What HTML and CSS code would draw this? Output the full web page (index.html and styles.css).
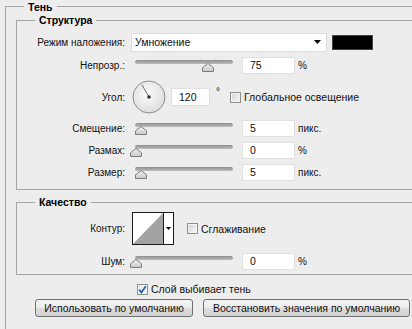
FILE: index.html
```html
<!DOCTYPE html>
<html lang="ru">
<head>
  <meta charset="UTF-8">
  <title>Тень</title>
  <link rel="stylesheet" href="styles.css">
</head>
<body>

<section class="dialog">
  <div class="dialog-title"><span>Тень</span></div>

  <div class="dialog-body">
    <!-- Структура -->
    <fieldset class="group structure">
      <legend>Структура</legend>

      <div class="row row-blend">
        <span class="label">Режим наложения:</span>
        <div class="select">
          <span>Умножение</span>
          <svg class="select-arrow" width="7" height="4" viewBox="0 0 7 4"><polygon points="0,0 7,0 3.5,4" fill="#000"/></svg>
        </div>
        <span class="swatch"></span>
      </div>

      <div class="row row-slider row-opacity">
        <span class="label">Непрозр.:</span>
        <div class="slider">
          <div class="track"></div>
          <svg class="thumb" style="left:71px" width="12" height="9" viewBox="0 0 12 9"><use href="#thumb-shape"/></svg>
        </div>
        <span class="field">75</span>
        <span class="unit">%</span>
      </div>

      <div class="row row-angle">
        <span class="label">Угол:</span>
        <svg class="dial" width="34" height="34" viewBox="0 0 34 34">
          <defs>
            <radialGradient id="dial-fill" cx="0.45" cy="0.4" r="0.7">
              <stop offset="0" stop-color="#fbfbfb"/>
              <stop offset="1" stop-color="#d9d9d9"/>
            </radialGradient>
          </defs>
          <circle cx="17" cy="17" r="16" fill="url(#dial-fill)" stroke="#8c8c8c"/>
          <line x1="17" y1="17" x2="10" y2="4.9" stroke="#666" stroke-width="1"/>
          <circle cx="17" cy="17" r="1.8" fill="#333"/>
        </svg>
        <span class="field field-angle">120</span>
        <span class="unit unit-deg">°</span>
        <span class="checkbox"></span>
        <span class="check-label">Глобальное освещение</span>
      </div>

      <div class="row row-slider row-distance">
        <span class="label">Смещение:</span>
        <div class="slider">
          <div class="track"></div>
          <svg class="thumb" style="left:4px" width="12" height="9" viewBox="0 0 12 9"><use href="#thumb-shape"/></svg>
        </div>
        <span class="field">5</span>
        <span class="unit">пикс.</span>
      </div>

      <div class="row row-slider row-spread">
        <span class="label">Размах:</span>
        <div class="slider">
          <div class="track"></div>
          <svg class="thumb" style="left:-1px" width="12" height="9" viewBox="0 0 12 9"><use href="#thumb-shape"/></svg>
        </div>
        <span class="field">0</span>
        <span class="unit">%</span>
      </div>

      <div class="row row-slider row-size">
        <span class="label">Размер:</span>
        <div class="slider">
          <div class="track"></div>
          <svg class="thumb" style="left:4px" width="12" height="9" viewBox="0 0 12 9"><use href="#thumb-shape"/></svg>
        </div>
        <span class="field">5</span>
        <span class="unit">пикс.</span>
      </div>
    </fieldset>

    <!-- Качество -->
    <fieldset class="group quality">
      <legend>Качество</legend>

      <div class="row row-contour">
        <span class="label">Контур:</span>
        <svg class="contour" width="42" height="33" viewBox="0 0 42 33">
          <rect x="0.5" y="0.5" width="41" height="32" fill="#fff" stroke="#1a1a1a"/>
          <polygon points="1,32 31,1 31,32" fill="#a3a3a3"/>
          <line x1="31.5" y1="1" x2="31.5" y2="32" stroke="#1a1a1a"/>
          <polygon points="34,15 39,15 36.5,18" fill="#000"/>
        </svg>
        <span class="checkbox checkbox-aa"></span>
        <span class="check-label">Сглаживание</span>
      </div>

      <div class="row row-slider row-noise">
        <span class="label">Шум:</span>
        <div class="slider">
          <div class="track"></div>
          <svg class="thumb" style="left:-1px" width="12" height="9" viewBox="0 0 12 9"><use href="#thumb-shape"/></svg>
        </div>
        <span class="field">0</span>
        <span class="unit">%</span>
      </div>
    </fieldset>

    <div class="knockout">
      <span class="checkbox checked">
        <svg width="9" height="9" viewBox="0 0 9 9"><path d="M1.2 4.6 L3.4 7.4 L7.8 1.2" fill="none" stroke="#2a5fb8" stroke-width="1.8"/></svg>
      </span>
      <span class="check-label">Слой выбивает тень</span>
    </div>

    <div class="buttons">
      <button class="btn btn-default">Использовать по умолчанию</button>
      <button class="btn btn-reset">Восстановить значения по умолчанию</button>
    </div>
  </div>
</section>

<svg width="0" height="0" class="defs">
  <defs>
    <linearGradient id="thumb-fill" x1="0" y1="0" x2="0" y2="1">
      <stop offset="0" stop-color="#f4f4f4"/>
      <stop offset="1" stop-color="#c9c9c9"/>
    </linearGradient>
    <polygon id="thumb-shape" points="0.5,8.5 0.5,4.8 6,0.5 11.5,4.8 11.5,8.5" fill="url(#thumb-fill)" stroke="#7d7d7d"/>
  </defs>
</svg>

</body>
</html>
```

FILE: styles.css
```css
html, body {
  margin: 0;
  height: 100%;
  overflow: hidden;
}

body {
  font-family: 'Liberation Sans', Arial, sans-serif;
  font-size: 10px;
  color: #111;
  background: #ededed;
}

.defs {
  position: absolute;
}

/* outer "Тень" box, cropped on the right and bottom */
.dialog {
  margin-left: 5px;
}

.dialog-title {
  display: flex;
  height: 14px;
  font-weight: bold;
  font-size: 10.5px;
  line-height: 14px;
  color: #000;
}

.dialog-title span {
  padding: 0 4px;
}

.dialog-title::before {
  content: "";
  width: 18px;
  height: 7px;
  align-self: flex-end;
  border-top: 1px solid #a4a4a4;
  border-left: 1px solid #a4a4a4;
}

.dialog-title::after {
  content: "";
  flex: 1;
  height: 7px;
  align-self: flex-end;
  border-top: 1px solid #a4a4a4;
}

.dialog-body {
  border-left: 1px solid #a4a4a4;
  height: 330px;
}

/* inner groups, no right borders since they run off the crop */
.group {
  margin: 0;
  padding: 0;
  border: 1px solid #a4a4a4;
  border-right: none;
  min-width: 0;
}

.group legend {
  font-weight: bold;
  font-size: 10.5px;
  line-height: 14px;
  padding: 0 4px;
  margin-left: 18px;
  color: #000;
}

.structure {
  margin: -1px 0 0 10px;
  padding: 4px 0 8px;
}

.quality {
  margin: 5px 0 0 10px;
  padding: 3px 0 4px;
}

/* rows */
.row {
  display: flex;
  align-items: center;
}

.label {
  width: 108px;
  margin-right: 6px;
  text-align: right;
  flex: none;
}

.row-blend { height: 22px; }
.row-opacity { margin-top: 3px; }
.row-angle { height: 34px; margin-top: 6px; }
.row-distance { margin-top: 5px; }
.row-spread, .row-size { margin-top: 4px; }
.row-slider { height: 18px; }
.row-contour { height: 33px; }
.row-noise { margin-top: 7px; }

.select {
  width: 196px;
  height: 19px;
  background: #fff;
  border: 1px solid #dcdcdc;
  display: flex;
  align-items: center;
  justify-content: space-between;
  padding: 0 5px 0 3px;
  box-sizing: border-box;
  font-size: 10.5px;
  flex: none;
}

.swatch {
  width: 41px;
  height: 15px;
  margin-left: 5px;
  background: #000;
  border: 1px solid #444;
  box-sizing: border-box;
  flex: none;
}

/* slider */
.slider {
  position: relative;
  width: 107px;
  height: 18px;
  flex: none;
}

.track {
  position: absolute;
  left: 4px;
  top: 4px;
  width: 98px;
  height: 4px;
  border-radius: 2px;
  background: linear-gradient(#8e8e8e, #bdbdbd);
}

.thumb {
  position: absolute;
  top: 7px;
}

.field {
  width: 53px;
  height: 17px;
  margin-left: 4px;
  padding-left: 7px;
  box-sizing: border-box;
  background: #fff;
  border: 1px solid #e0e0e0;
  line-height: 15px;
  flex: none;
  font-size: 10.5px;
}

.unit {
  margin-left: 3px;
}

/* angle */
.dial {
  margin-left: 1px;
  flex: none;
}

.field-angle {
  width: 39px;
  height: 18px;
  margin-left: 5px;
  line-height: 16px;
}

.unit-deg {
  margin-left: 6px;
  align-self: flex-start;
  margin-top: 6px;
}

.checkbox {
  width: 11px;
  height: 11px;
  margin-left: 10px;
  box-sizing: border-box;
  border: 1px solid #8e8f8f;
  box-shadow: inset 0 0 0 1px #f4f4f4;
  background: linear-gradient(135deg, #cfd2d6, #fafafa);
  display: inline-flex;
  align-items: center;
  justify-content: center;
  flex: none;
}

.check-label {
  margin-left: 3px;
  font-size: 10.5px;
  white-space: nowrap;
}

.contour {
  margin-left: 1px;
  flex: none;
}

.checkbox-aa {
  margin-left: 13px;
}

.knockout {
  display: flex;
  align-items: center;
  height: 12px;
  margin-top: 8px;
  padding-left: 131px;
}

.knockout .checkbox {
  margin-left: 0;
}

.checked {
  background: linear-gradient(135deg, #e2e6ea, #fbfbfb);
}

.buttons {
  display: flex;
  gap: 10px;
  margin-top: 4px;
  padding-left: 29px;
}

.btn {
  height: 18px;
  padding: 0;
  flex: none;
  font-family: inherit;
  font-size: 10.5px;
  color: #111;
  white-space: nowrap;
  border: 1px solid #707070;
  border-radius: 3px;
  background: linear-gradient(#f4f4f4 0%, #ebebeb 48%, #dddddd 52%, #d2d2d2 100%);
  line-height: 16px;
}

.btn-default { width: 158px; }
.btn-reset { width: 207px; }
```
